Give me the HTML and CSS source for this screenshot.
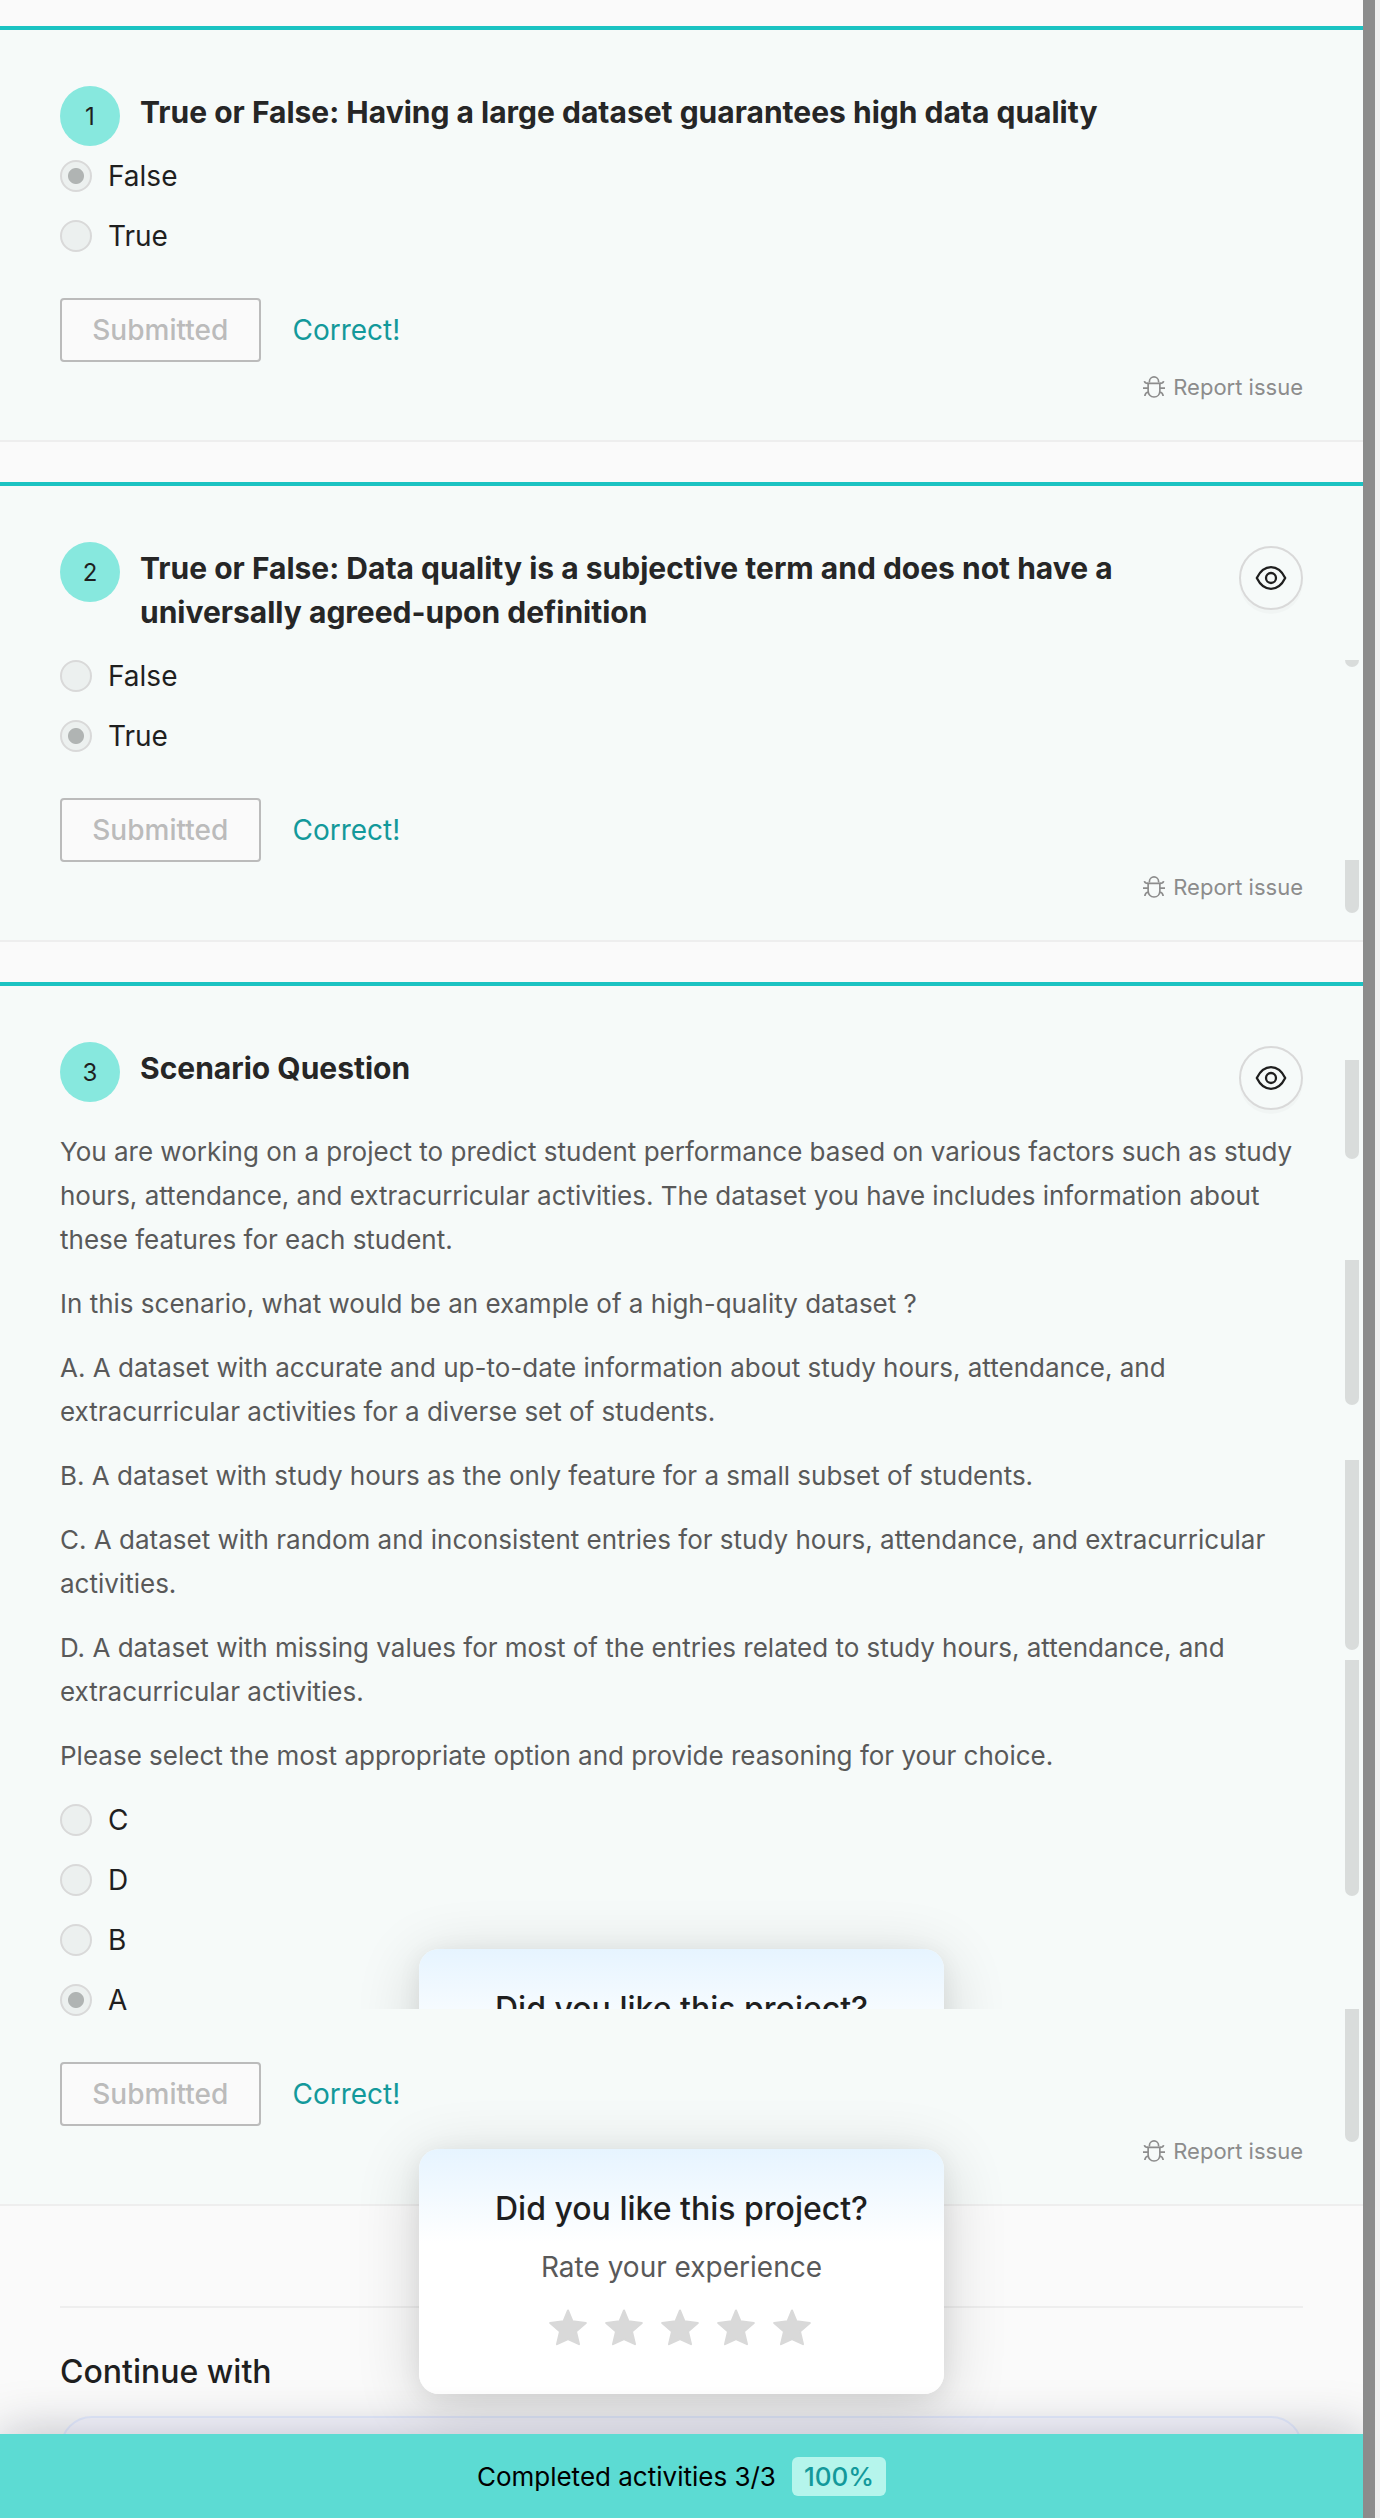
FILE: index.html
```html
<!DOCTYPE html>
<html lang="en">
<head>
<meta charset="utf-8">
<title>Project questions</title>
<link rel="stylesheet" href="styles.css">
</head>
<body>
<svg class="defs" width="0" height="0">
  <symbol id="bug" viewBox="0 0 24 24"><g fill="none" stroke="currentColor" stroke-width="1.8"><path d="M7 7V6a5 5 0 0 1 10 0v1"/><path d="M5.600 8h12.800v8c0 4-2.700 6.900-6.400 6.900S5.600 20 5.600 16z"/><path d="M1.500 5.500c.3 1.900 1.500 2.500 4.100 2.500M22.500 5.500c-.3 1.900-1.500 2.500-4.100 2.500M0 13.300h5.600M18.400 13.300H24M6 17.500c-2.600.4-3.800 1.700-4 4.300M18 17.500c2.600.4 3.800 1.700 4 4.300"/></g></symbol>
  <symbol id="eye" viewBox="0 0 32 32"><g fill="none" stroke="currentColor" stroke-width="2.300" stroke-linejoin="round"><path d="M1.800 16C5.500 8.500 10 5.200 16 5.200S26.500 8.500 30.200 16C26.500 23.500 22 26.800 16 26.800S5.500 23.500 1.800 16z"/><circle cx="16" cy="16" r="5"/></g></symbol>
  <symbol id="star" viewBox="0 0 38 38"><path fill="#d9d9d9" stroke="#d9d9d9" stroke-width="2" stroke-linejoin="round" d="M19 1.500L23.400 12.200L36.800 14L27 22.500L30 35.200L19 30L8 35.200L11 22.500L1.200 14L14.600 12.200z"/></symbol>
</svg>
<main class="page">
  <section class="card">
    <header class="head"><span class="num">1</span><h2>True or False: Having a large dataset guarantees high data quality</h2></header>
    <ul class="options"><li><i class="radio on"></i>False</li><li><i class="radio"></i>True</li></ul>
    <div class="result"><button disabled>Submitted</button><span>Correct!</span></div>
    <div class="report"><svg><use href="#bug"/></svg>Report issue</div>
  </section>
  <section class="card">
    <header class="head"><span class="num">2</span><h2>True or False: Data quality is a subjective term and does not have a universally agreed-upon definition</h2><span class="view"><svg><use href="#eye"/></svg></span></header>
    <ul class="options"><li><i class="radio"></i>False</li><li><i class="radio on"></i>True</li></ul>
    <div class="result"><button disabled>Submitted</button><span>Correct!</span></div>
    <div class="report"><svg><use href="#bug"/></svg>Report issue</div>
  </section>
  <section class="card">
    <header class="head"><span class="num">3</span><h2>Scenario Question</h2><span class="view"><svg><use href="#eye"/></svg></span></header>
    <div class="body">
      <p>You are working on a project to predict student performance based on various factors such as study hours, attendance, and extracurricular activities. The dataset you have includes information about these features for each student.</p>
      <p>In this scenario, what would be an example of a high-quality dataset ?</p>
      <p>A. A dataset with accurate and up-to-date information about study hours, attendance, and extracurricular activities for a diverse set of students.</p>
      <p>B. A dataset with study hours as the only feature for a small subset of students.</p>
      <p>C. A dataset with random and inconsistent entries for study hours, attendance, and extracurricular activities.</p>
      <p>D. A dataset with missing values for most of the entries related to study hours, attendance, and extracurricular activities.</p>
      <p>Please select the most appropriate option and provide reasoning for your choice.</p>
    </div>
    <ul class="options"><li><i class="radio"></i>C</li><li><i class="radio"></i>D</li><li><i class="radio"></i>B</li><li><i class="radio on"></i>A</li></ul>
    <div class="result"><button disabled>Submitted</button><span>Correct!</span></div>
    <div class="report"><svg><use href="#bug"/></svg>Report issue</div>
  </section>
  <section class="next"><h3>Continue with</h3><div class="tile"></div></section>

  <div class="peek"><div class="rate"><h4>Did you like this project?</h4></div></div>
  <div class="rate popup">
    <h4>Did you like this project?</h4>
    <p>Rate your experience</p>
    <div class="stars"><svg><use href="#star"/></svg><svg><use href="#star"/></svg><svg><use href="#star"/></svg><svg><use href="#star"/></svg><svg><use href="#star"/></svg></div>
  </div>
  <footer class="progress">Completed activities 3/3<b>100%</b></footer>
  <i class="thumb t1"></i><i class="thumb t2"></i><i class="thumb t3"></i><i class="thumb t4"></i><i class="thumb t5"></i><i class="thumb t6"></i><i class="thumb t7"></i>
</main>
<aside class="edge"></aside>
</body>
</html>
```

FILE: styles.css
```css
* { box-sizing: border-box; margin: 0; padding: 0; }
body { display: flex; width: 1380px; height: 2518px; overflow: hidden; background: #efefef; font-family: Inter, "Liberation Sans", sans-serif; color: #1f1f1f; }
.defs { position: absolute; }
.page { position: relative; width: 1363px; height: 2518px; padding-top: 26px; overflow: hidden; background: #fafafa; }
.edge { width: 12px; background: #8c8c8c; }

.card { padding: 56px 60px 33px; margin-bottom: 40px; background: #f6faf9; border-top: 4px solid #1bc3c2; border-bottom: 2px solid #eee; }
.head { display: flex; align-items: flex-start; gap: 20px; }
.num { flex: none; width: 60px; height: 60px; border-radius: 50%; background: #87e8de; font-size: 24px; line-height: 61px; text-align: center; }
.head h2 { flex: 1; padding: 4px 0 12px; font-size: 30px; line-height: 44px; font-weight: 700; color: #262626; }
.view { display: flex; flex: none; align-items: center; justify-content: center; width: 64px; height: 64px; margin: 4px 0 0 80px; border: 2px solid #d9d9d9; border-radius: 50%; box-shadow: 0 4px 0 rgba(0,0,0,.02); }
.view svg { width: 32px; height: 32px; }

.options { list-style: none; }
.options li { display: flex; align-items: center; gap: 16px; height: 60px; font-size: 28px; }
.radio { width: 32px; height: 32px; border: 2px solid #d9d9d9; border-radius: 50%; background: #ecf0ef; }
.radio.on { background: radial-gradient(circle, #b0b4b3 7.5px, #ecf0ef 8.5px); }
.result { display: flex; align-items: center; gap: 32px; margin-top: 32px; font-size: 28px; color: #13999b; }
.result button { width: 200.500px; height: 64px; border: 2px solid #bbb; border-radius: 4px; background: #fafafa; font: 500 28px Inter, sans-serif; color: #bbb; }
.report { display: flex; align-items: center; justify-content: flex-end; gap: 8px; height: 40px; margin-top: 5px; font-size: 22px; color: #8c8c8c; }
.report svg { width: 22px; height: 22px; }

.body { padding-top: 20px; font-size: 26px; line-height: 44px; color: #595959; }
.body p { margin-bottom: 20px; }
.body p:last-child { margin-bottom: 12px; }

.next { margin: 100px 60px 0; padding-top: 39px; border-top: 2px solid #eee; }
.next h3 { font-size: 32px; line-height: 50px; font-weight: 500; }
.tile { height: 120px; margin-top: 19px; border: 2px solid #e6edff; border-radius: 32px; background: #f8f8ff; }

.rate { width: 525px; height: 245px; padding-top: 38px; border-radius: 20px; background: linear-gradient(#e6f4ff, #fff 94px); box-shadow: 0 12px 64px rgba(0,0,0,.16), 0 4px 24px rgba(0,0,0,.06); text-align: center; }
.rate h4 { font-size: 32px; line-height: 44px; font-weight: 500; }
.rate p { margin-top: 16px; font-size: 28px; line-height: 40px; color: #595959; }
.popup { position: absolute; left: 419px; top: 2149px; }
.peek { position: absolute; left: 319px; top: 1849px; width: 725px; height: 160px; padding: 100px 100px 0; overflow: hidden; }
.stars { display: flex; justify-content: center; gap: 18px; margin-top: 22px; padding-right: 3px; }
.stars svg { width: 38px; height: 38px; }
.progress { position: absolute; left: 0; bottom: 0; display: flex; align-items: center; justify-content: center; gap: 16px; width: 100%; height: 84px; background: #5cdbd3; box-shadow: 0 0 52px rgba(12,12,40,.26); font-size: 26px; color: #000; }
.progress b { padding: 0 12px; border-radius: 6px; background: #b5f5ec; line-height: 39px; font-weight: 500; color: #13999b; }

.thumb { position: absolute; right: 4px; width: 14px; border-radius: 0 0 7px 7px; background: #d9dcdb; }
.t1 { top: 660px; height: 7px; }
.t2 { top: 860px; height: 53px; }
.t3 { top: 1060px; height: 99px; }
.t4 { top: 1260px; height: 145px; }
.t5 { top: 1460px; height: 190px; }
.t6 { top: 1660px; height: 236px; }
.t7 { top: 2009px; height: 133px; }
```
